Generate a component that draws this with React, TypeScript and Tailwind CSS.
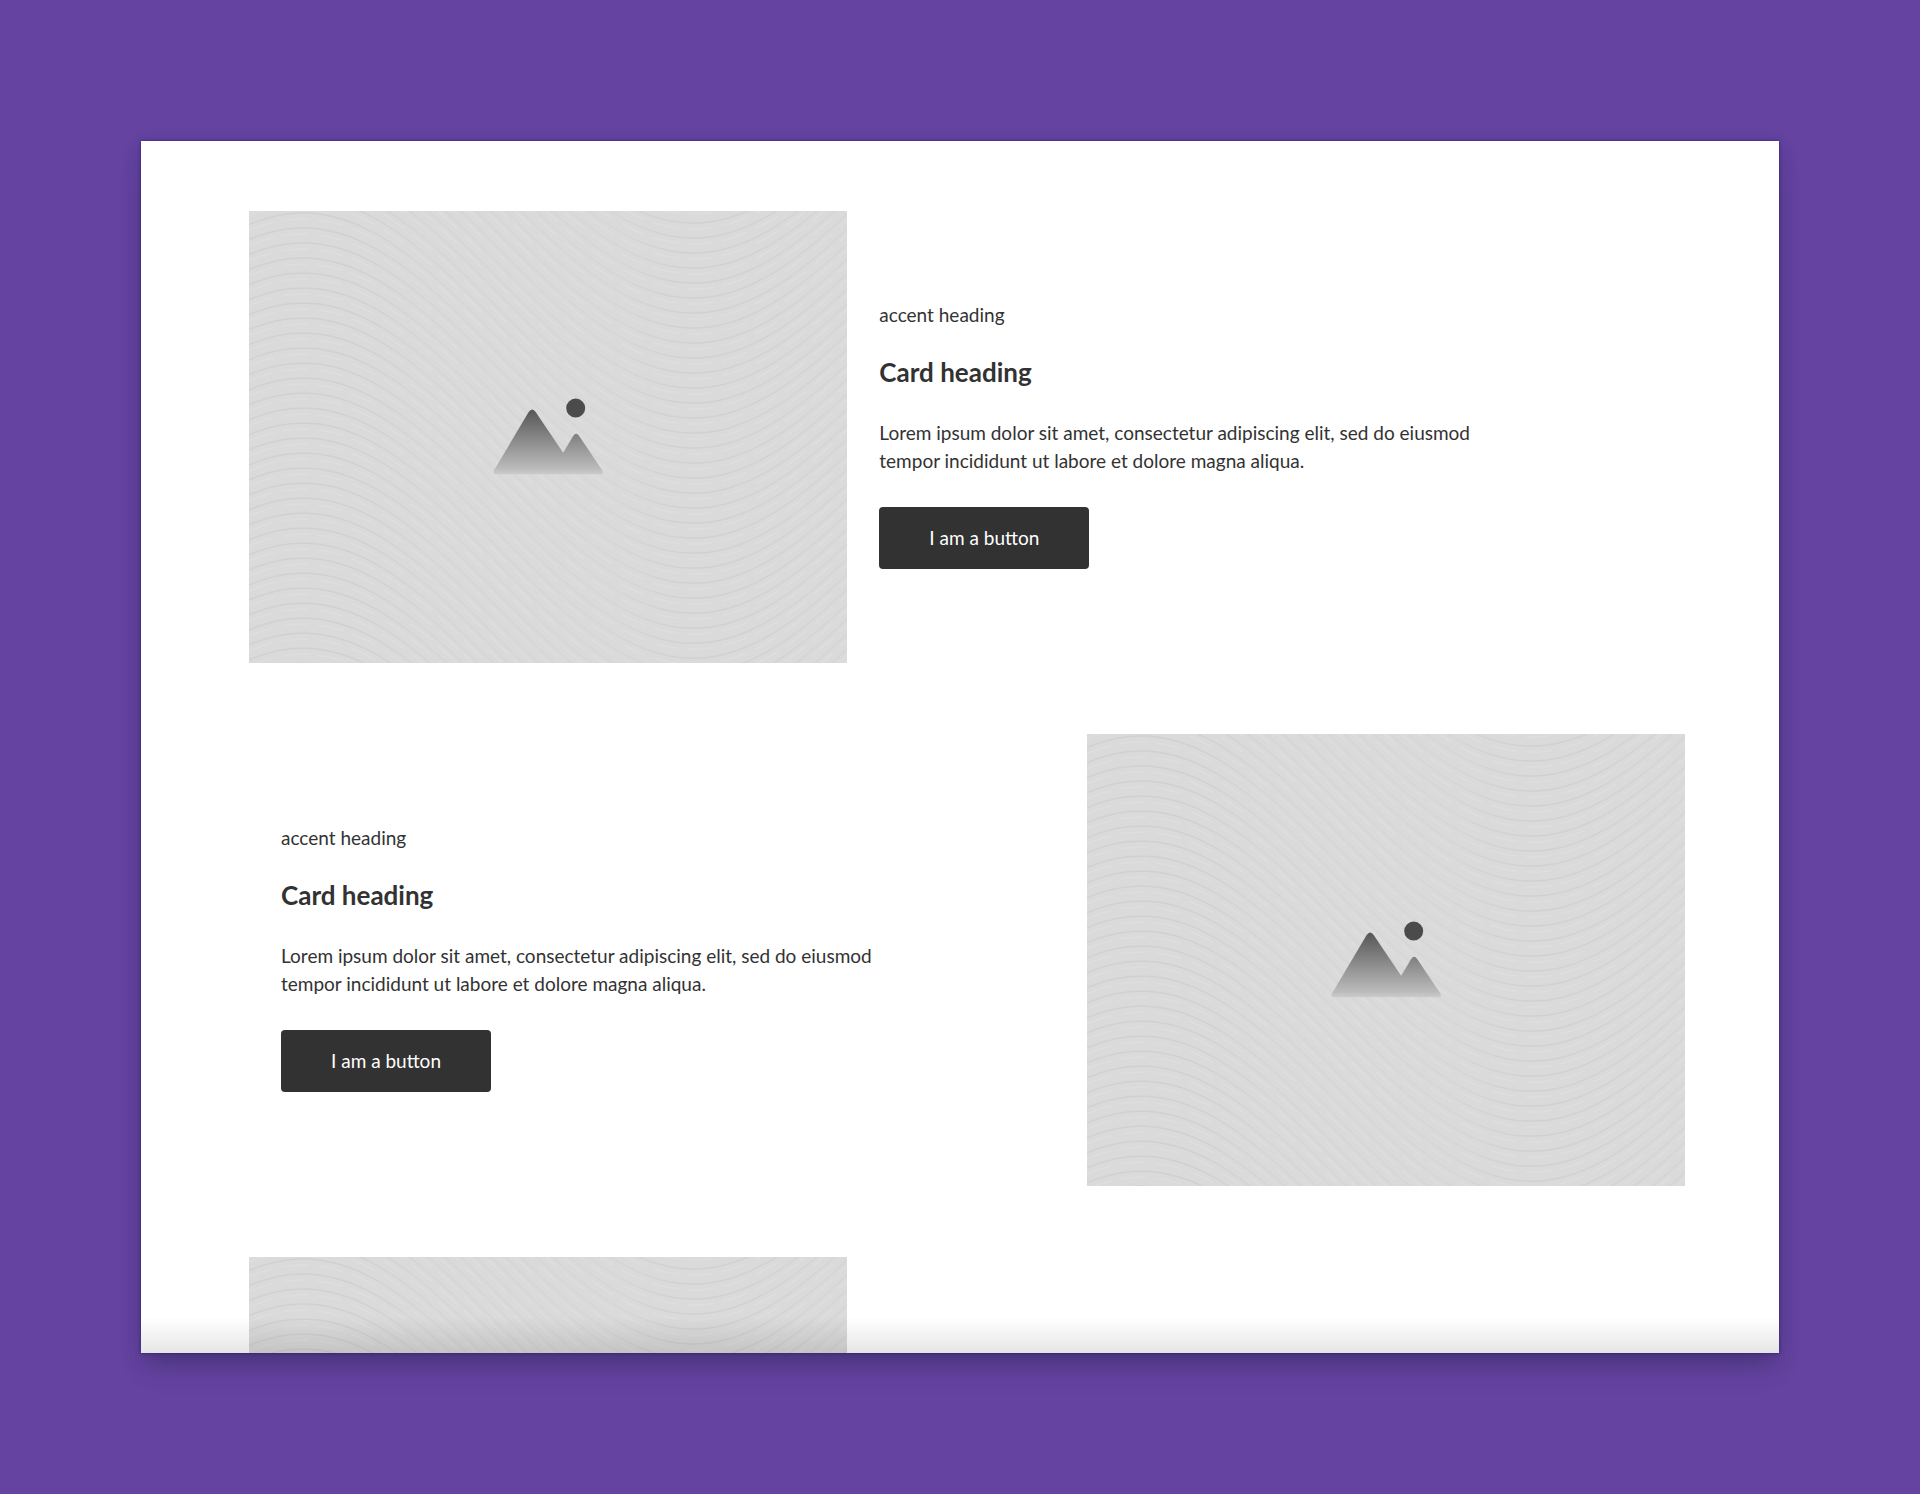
import { useId } from 'react'

const WAVE_LENGTH = 780
const WAVE_HEIGHT = 125

function wavePath(offset: number) {
  const points: string[] = []
  for (let x = 0; x <= 600; x += 10) {
    const y = offset - WAVE_HEIGHT * Math.cos(((x - 54) * 2 * Math.PI) / WAVE_LENGTH)
    points.push(`${x} ${y.toFixed(1)}`)
  }
  return `M${points.join('L')}`
}

const darkWaves = Array.from({ length: 50 }, (_, i) => wavePath(i * 15 - 128)).join('')
const lightWaves = Array.from({ length: 50 }, (_, i) => wavePath(i * 15 - 122)).join('')

function PlaceholderImage() {
  const id = useId()
  return (
    <svg viewBox="0 0 598 452" role="img" aria-label="Placeholder" className="block h-auto w-full bg-[#dadada]">
      <defs>
        <linearGradient id={`${id}fill`} gradientUnits="userSpaceOnUse" x1="0" y1="196" x2="0" y2="264">
          <stop offset="0" stopColor="#4e4e4e" />
          <stop offset="0.12" stopColor="#606060" />
          <stop offset="0.9" stopColor="#bababa" />
          <stop offset="1" stopColor="#cecece" />
        </linearGradient>
        <linearGradient id={`${id}wave`} gradientUnits="userSpaceOnUse" x1="0" y1="0" x2="598" y2="0">
          <stop offset="0" stopColor="#d1d1d1" />
          <stop offset="0.16" stopColor="#d0d0d0" />
          <stop offset="0.3" stopColor="#d5d5d5" />
          <stop offset="0.6" stopColor="#d6d6d6" />
          <stop offset="0.75" stopColor="#d0d0d0" />
          <stop offset="1" stopColor="#d5d5d5" />
        </linearGradient>
      </defs>
      <path d={darkWaves} fill="none" stroke={`url(#${id}wave)`} strokeWidth="1.5" />
      <path d={lightWaves} fill="none" stroke="#dedede" strokeWidth="1.5" strokeDasharray="26 9" />
      <path
        d="M246.500 263Q243 263 245 259L279.500 201Q283 196 286.500 201L314 241.500L324 225Q327 220.500 330 225L353 259Q355 263 352 263Z"
        fill={`url(#${id}fill)`}
      />
      <circle cx="326.500" cy="197" r="9.500" fill="#4b4b4b" />
    </svg>
  )
}

function Card({ flipped }: { flipped: boolean }) {
  return (
    <article className={flipped ? 'flex flex-row-reverse items-center' : 'flex items-center'}>
      <div className="w-5/12 shrink-0">
        <PlaceholderImage />
      </div>
      <div className="flex w-7/12 flex-col items-start gap-8 px-8 text-[#323232]">
        <p className="text-[19px] leading-5">accent heading</p>
        <h2 className="text-[26px] leading-[30px] font-bold">Card heading</h2>
        <p className="max-w-[630px] text-[19px] leading-7">
          Lorem ipsum dolor sit amet, consectetur adipiscing elit, sed do eiusmod tempor incididunt ut labore et dolore
          magna aliqua.
        </p>
        <button type="button" className="h-[62px] rounded bg-[#323232] px-[50px] text-[19px] leading-7 text-white">
          I am a button
        </button>
      </div>
    </article>
  )
}

export default function App() {
  return (
    <main className="h-screen bg-[#6443a1] p-[141px] font-[Lato,sans-serif]">
      <div className="relative h-full overflow-hidden bg-white pt-[70px] pr-[94px] pl-[108px] shadow-[0_0_3px_rgba(30,10,90,0.6),0_6px_16px_rgba(40,40,80,0.25),0_20px_24px_-8px_rgba(50,40,80,0.35)]">
        <div className="flex flex-col gap-[71px]">
          <Card flipped={false} />
          <Card flipped={true} />
          <div className="w-5/12">
            <PlaceholderImage />
          </div>
        </div>
        <div className="pointer-events-none absolute inset-x-0 bottom-0 h-9 bg-linear-to-t from-black/10 to-transparent" />
      </div>
    </main>
  )
}
